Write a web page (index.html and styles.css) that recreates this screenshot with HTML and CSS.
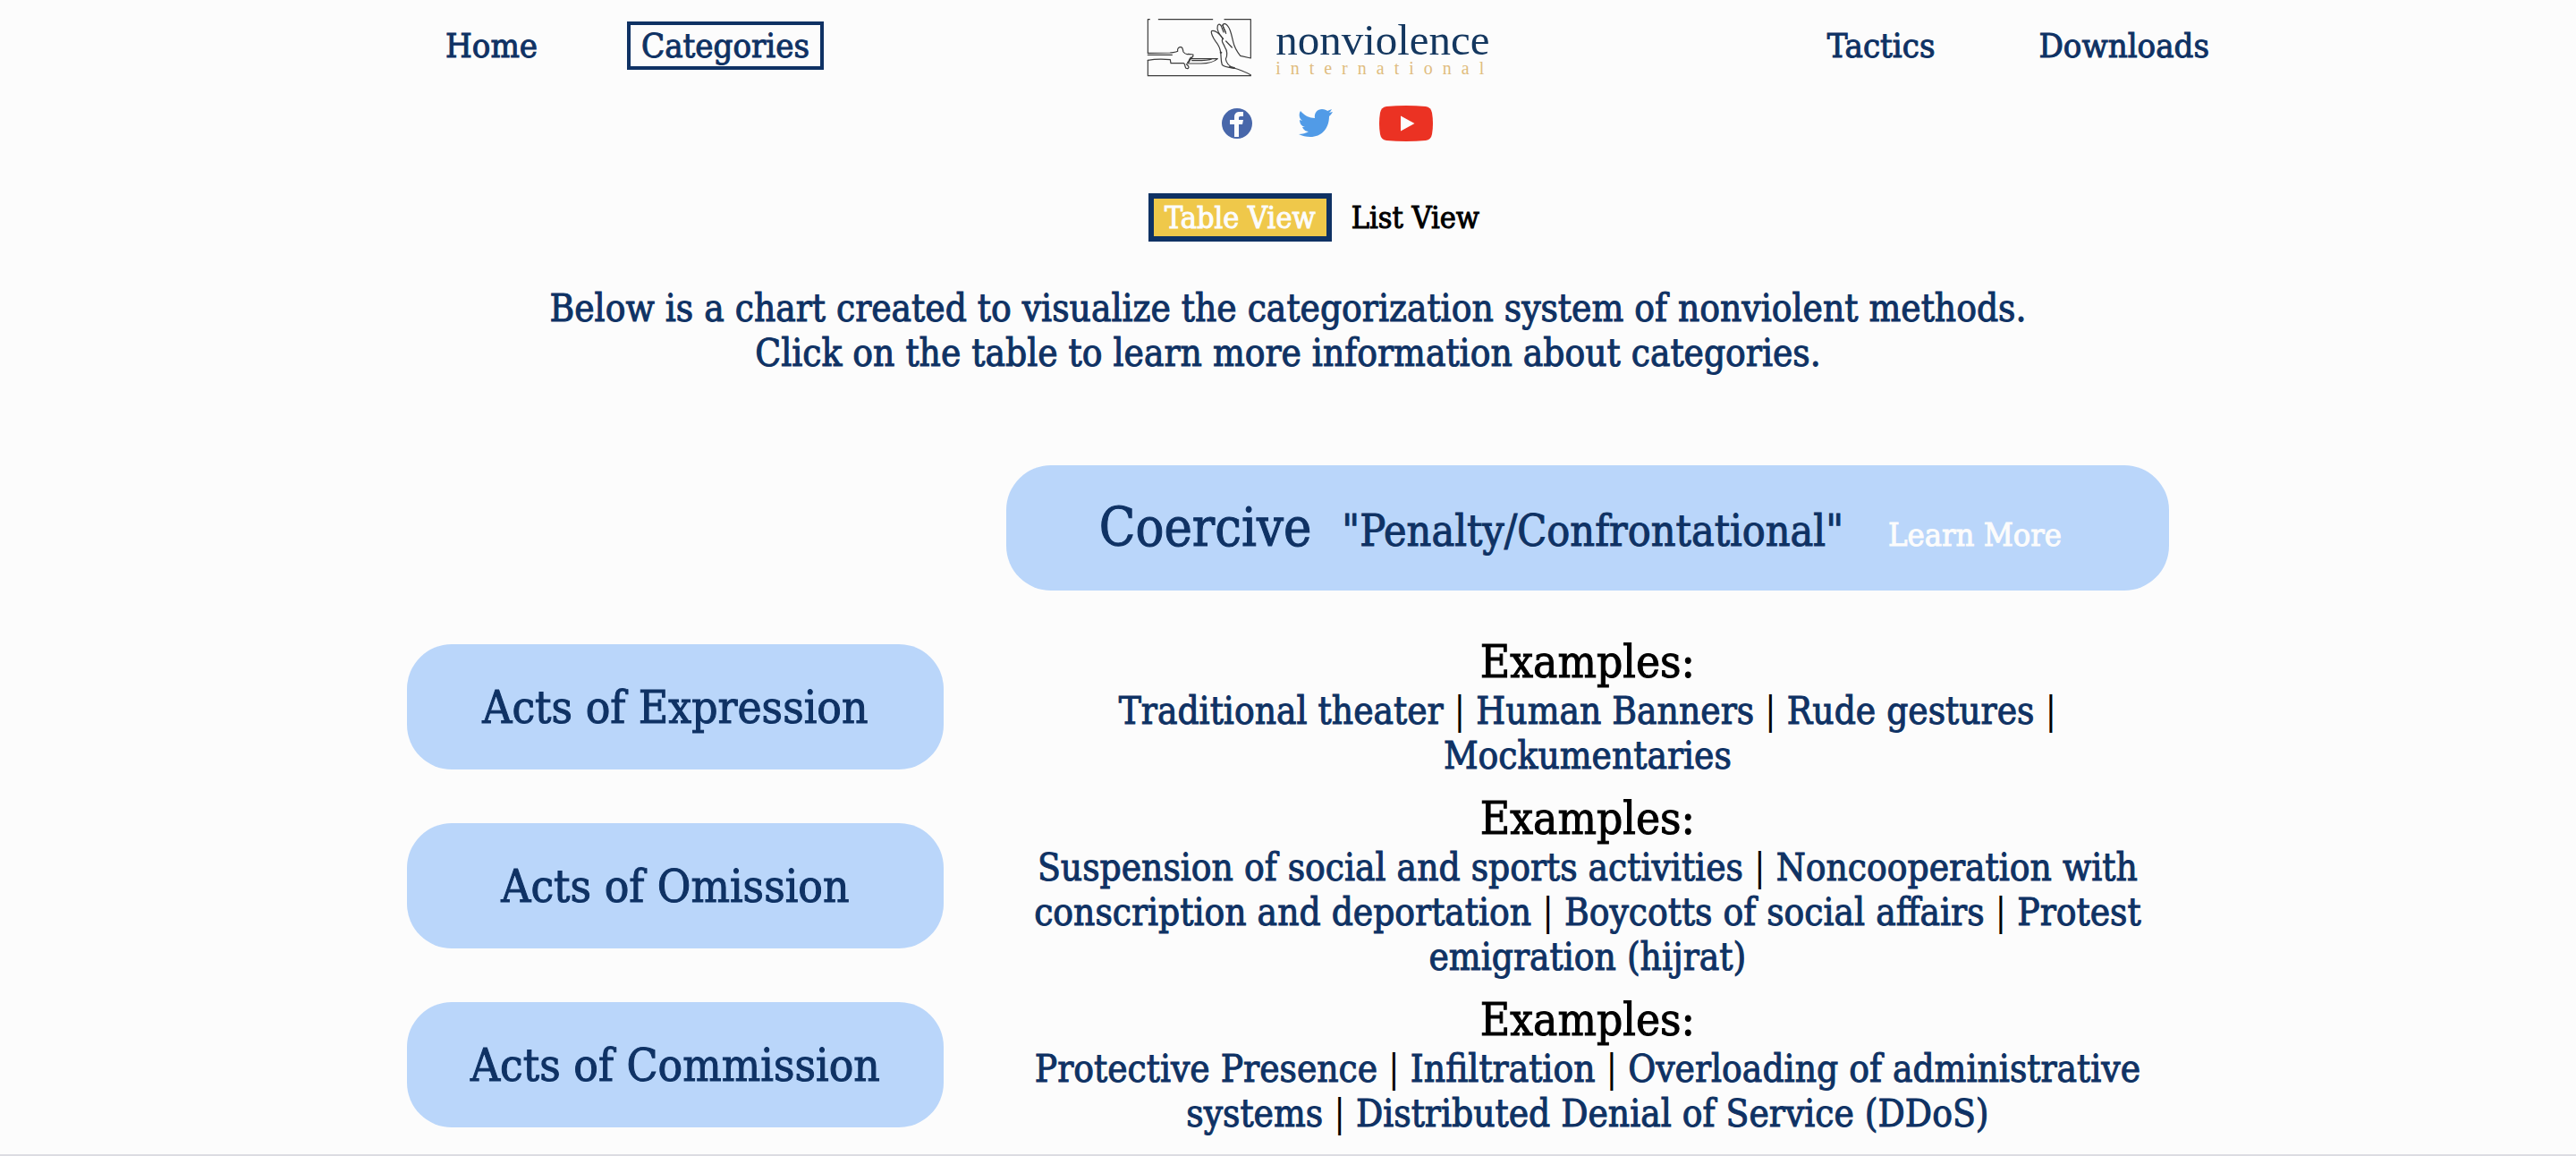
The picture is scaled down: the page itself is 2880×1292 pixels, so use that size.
FILE: index.html
```html
<!DOCTYPE html>
<html lang="en">
<head>
<meta charset="utf-8">
<meta name="viewport" content="width=device-width, initial-scale=1">
<title>Categories - Nonviolence International</title>
<link rel="stylesheet" href="styles.css">
</head>
<body>
<header class="site-header">
  <div class="bar">
    <nav class="nav">
      <a class="nav-link" href="#home">Home</a>
      <a class="nav-link current" href="#categories" aria-current="page">Categories</a>
    </nav>
    <a class="logo" href="#home">
      <svg class="logo-art" viewBox="22 18 351 198" fill="none" stroke="#3c3c3c" stroke-width="3.6" stroke-linejoin="round" stroke-linecap="round" aria-hidden="true">
        <path d="M32 23H26V136M62 23H243M283 23H371V153L336 145C324 130 316 116 312 98C306 72 301 46 286 38C277 36 276 42 280 52L288 70"/>
        <path d="M26 136L100 135C112 133 120 134 126 130C124 120 130 115 138 116C144 118 143 126 145 132C150 139 156 141 162 139L178 141L177 148L166 158"/>
        <path d="M26 142H107" stroke-width="4"/>
        <path d="M26 160C50 156 78 156 101 158L103 170L146 170C152 172 148 179 154 187C160 190 165 186 162 180L155 173"/>
        <path d="M26 160V212H371V209C350 198 330 190 314 186C296 184 280 182 275 175C270 160 272 145 270 133C268 118 262 108 254 98C244 84 236 66 240 62C250 58 270 72 277 88"/>
        <path d="M277 88C270 98 280 102 284 116C293 128 293 146 287 156C289 168 298 180 314 186"/>
        <path d="M279 88C264 74 256 55 260 44C264 36 271 40 274 50L280 66M276 42L286 64M288 96L308 117"/>
        <path d="M170 155L260 155C250 164 228 171 204 171L158 171M174 161C198 161 230 162 240 156"/>
        <path d="M172 151C164 156 168 162 160 168" stroke-width="6"/>
        <path d="M270 134H272M301 183L316 186" stroke-width="6"/>
      </svg>
      <span class="wordmark">
        <span class="word-main">nonviolence</span>
        <span class="word-sub">international</span>
      </span>
    </a>
    <nav class="nav">
      <a class="nav-link" href="#tactics">Tactics</a>
      <a class="nav-link" href="#downloads">Downloads</a>
    </nav>
  </div>
  <div class="social">
    <a href="#facebook" aria-label="Facebook"><svg width="34" height="34" viewBox="0 0 34 34"><circle cx="17" cy="17" r="17" fill="#4867aa"/><path d="M14 32V18H9V13H14V10C14 5 17 4 20 4H24V9H21C19 9 19 10 19 11V13H24L23 18H19V32Z" fill="#fcfcfc"/></svg></a>
    <a href="#twitter" aria-label="Twitter"><svg width="38" height="32" viewBox="0 0 38 32"><path d="M2 2C6 7 12 10 18 10C17 4 21 0 26 0C29 0 31 1 32 2L37 0C36 2 35 3 34 4L38 3C37 5 36 6 34 8C34 22 25 31 13 31C8 31 4 30 0 28C4 28 8 27 11 25C7 25 5 22 4 20H7C3 19 1 16 1 12L4 13C0 10 0 5 2 2Z" fill="#519be7"/></svg></a>
    <a href="#youtube" aria-label="YouTube"><svg width="60" height="40" viewBox="0 0 60 40"><path d="M8 1Q30 -1 52 1Q58 2 59 8Q61 20 59 32Q58 38 52 39Q30 41 8 39Q2 38 1 32Q-1 20 1 8Q2 2 8 1Z" fill="#eb3223"/><path d="M24 11.500L39.500 20L24 28.500Z" fill="#fcfcfc"/></svg></a>
  </div>
  <div class="views">
    <button class="view active" type="button" aria-pressed="true">Table View</button>
    <button class="view" type="button" aria-pressed="false">List View</button>
  </div>
</header>
<main>
  <p class="intro">Below is a chart created to visualize the categorization system of nonviolent methods.<br>Click on the table to learn more information about categories.</p>
  <table class="chart">
    <thead>
      <tr>
        <td></td>
        <th scope="col">
          <div class="pill heading">
            <span class="heading-name">Coercive</span>
            <span class="heading-note">"Penalty/Confrontational"</span>
            <a class="learn" href="#coercive">Learn More</a>
          </div>
        </th>
      </tr>
    </thead>
    <tbody>
      <tr>
        <th scope="row"><a class="pill" href="#expression">Acts of Expression</a></th>
        <td>
          <h2 class="examples">Examples:</h2>
          <p class="methods"><a href="#m1">Traditional theater</a> <span>|</span> <a href="#m2">Human Banners</a> <span>|</span> <a href="#m3">Rude gestures</a> <span>|</span> <a href="#m4">Mockumentaries</a></p>
        </td>
      </tr>
      <tr>
        <th scope="row"><a class="pill" href="#omission">Acts of Omission</a></th>
        <td>
          <h2 class="examples">Examples:</h2>
          <p class="methods"><a href="#m5">Suspension of social and sports activities</a> <span>|</span> <a href="#m6">Noncooperation with conscription and deportation</a> <span>|</span> <a href="#m7">Boycotts of social affairs</a> <span>|</span> <a href="#m8">Protest emigration (hijrat)</a></p>
        </td>
      </tr>
      <tr>
        <th scope="row"><a class="pill" href="#commission">Acts of Commission</a></th>
        <td>
          <h2 class="examples">Examples:</h2>
          <p class="methods"><a href="#m9">Protective Presence</a> <span>|</span> <a href="#m10">Infiltration</a> <span>|</span> <a href="#m11">Overloading of administrative systems</a> <span>|</span> <a href="#m12">Distributed Denial of Service (DDoS)</a></p>
        </td>
      </tr>
    </tbody>
  </table>
</main>
</body>
</html>
```
FILE: styles.css
```css
:root {
  --navy: #0f3264;
  --sky: #bad6fa;
  --gold: #efc84a;
  --paper: #fcfcfc;
}

* {
  box-sizing: border-box;
}

body {
  margin: 0;
  background: var(--paper);
  color: #000;
  font-family: "DejaVu Serif Condensed", "DejaVu Serif", serif;
  -webkit-text-stroke: 1px;
}

a {
  color: var(--navy);
  text-decoration: none;
}

/* Header */
.site-header {
  width: 70%;
  max-width: 2004px;
  margin-left: 482px;
  padding-top: 20px;
}

.bar {
  display: flex;
  justify-content: space-between;
  align-items: flex-start;
}

.nav {
  display: flex;
  gap: 84px;
  padding-top: 4px;
}

.nav-link {
  padding: 0 12px;
  border: 4px solid transparent;
  font-size: 38px;
  line-height: 46px;
}

.current {
  border-color: var(--navy);
}

.logo {
  display: flex;
  gap: 27px;
  height: 68px;
}

.logo-art {
  width: 117px;
  height: 66px;
}

.wordmark {
  display: flex;
  flex-direction: column;
  font-family: "Liberation Serif", serif;
  -webkit-text-stroke: 0;
}

.word-main {
  font-size: 49px;
  line-height: 50px;
  color: #14375f;
}

.word-sub {
  font-size: 20px;
  line-height: 12px;
  letter-spacing: 11px;
  margin-right: -11px;
  color: #e0bd80;
}

.social {
  display: flex;
  justify-content: center;
  align-items: center;
  gap: 52px;
  margin-top: 30px;
}

.social a,
.social svg {
  display: block;
}

.views {
  display: flex;
  justify-content: center;
  gap: 4px;
  padding-right: 12px;
  margin-top: 58px;
}

.view {
  padding: 0 12px;
  border: 6px solid transparent;
  background: none;
  color: #000;
  font-family: inherit;
  font-size: 34px;
  line-height: 42px;
}

.active {
  border-color: var(--navy);
  background: var(--gold);
  color: var(--paper);
}

/* Chart */
main {
  border-bottom: 2px solid #dcdce2;
}

.intro {
  margin: 50px 0 70px;
  color: var(--navy);
  font-size: 42px;
  line-height: 50px;
  text-align: center;
}

.chart {
  width: 70%;
  max-width: 1970px;
  margin: 0 auto;
  border-collapse: collapse;
  table-layout: fixed;
}

.chart tr {
  height: 200px;
}

.chart th,
.chart td {
  padding: 0;
  font-weight: normal;
  text-align: center;
  vertical-align: middle;
}

.chart tr > :first-child {
  width: 34%;
  padding-right: 70px;
}

.chart tbody td {
  padding: 0 20px;
}

.pill {
  display: flex;
  justify-content: center;
  align-items: center;
  min-height: 140px;
  border-radius: 50px;
  background: var(--sky);
  color: var(--navy);
  font-size: 51px;
}

.heading {
  align-items: baseline;
  gap: 34px;
  padding: 40px 0 32px;
  line-height: 60px;
}

.heading-name {
  font-size: 59px;
}

.heading-note {
  font-size: 48px;
}

.learn {
  padding: 0 16px;
  color: var(--paper);
  font-size: 36px;
}

/* The negative outer margins let the longest list share the 200px row height */
.examples {
  margin: -5px 0 0;
  font-size: 51px;
  font-weight: normal;
  line-height: 60px;
}

.methods {
  margin: 0 0 -5px;
  font-size: 42px;
  line-height: 50px;
}

.methods span {
  -webkit-text-stroke: 0;
}
```
